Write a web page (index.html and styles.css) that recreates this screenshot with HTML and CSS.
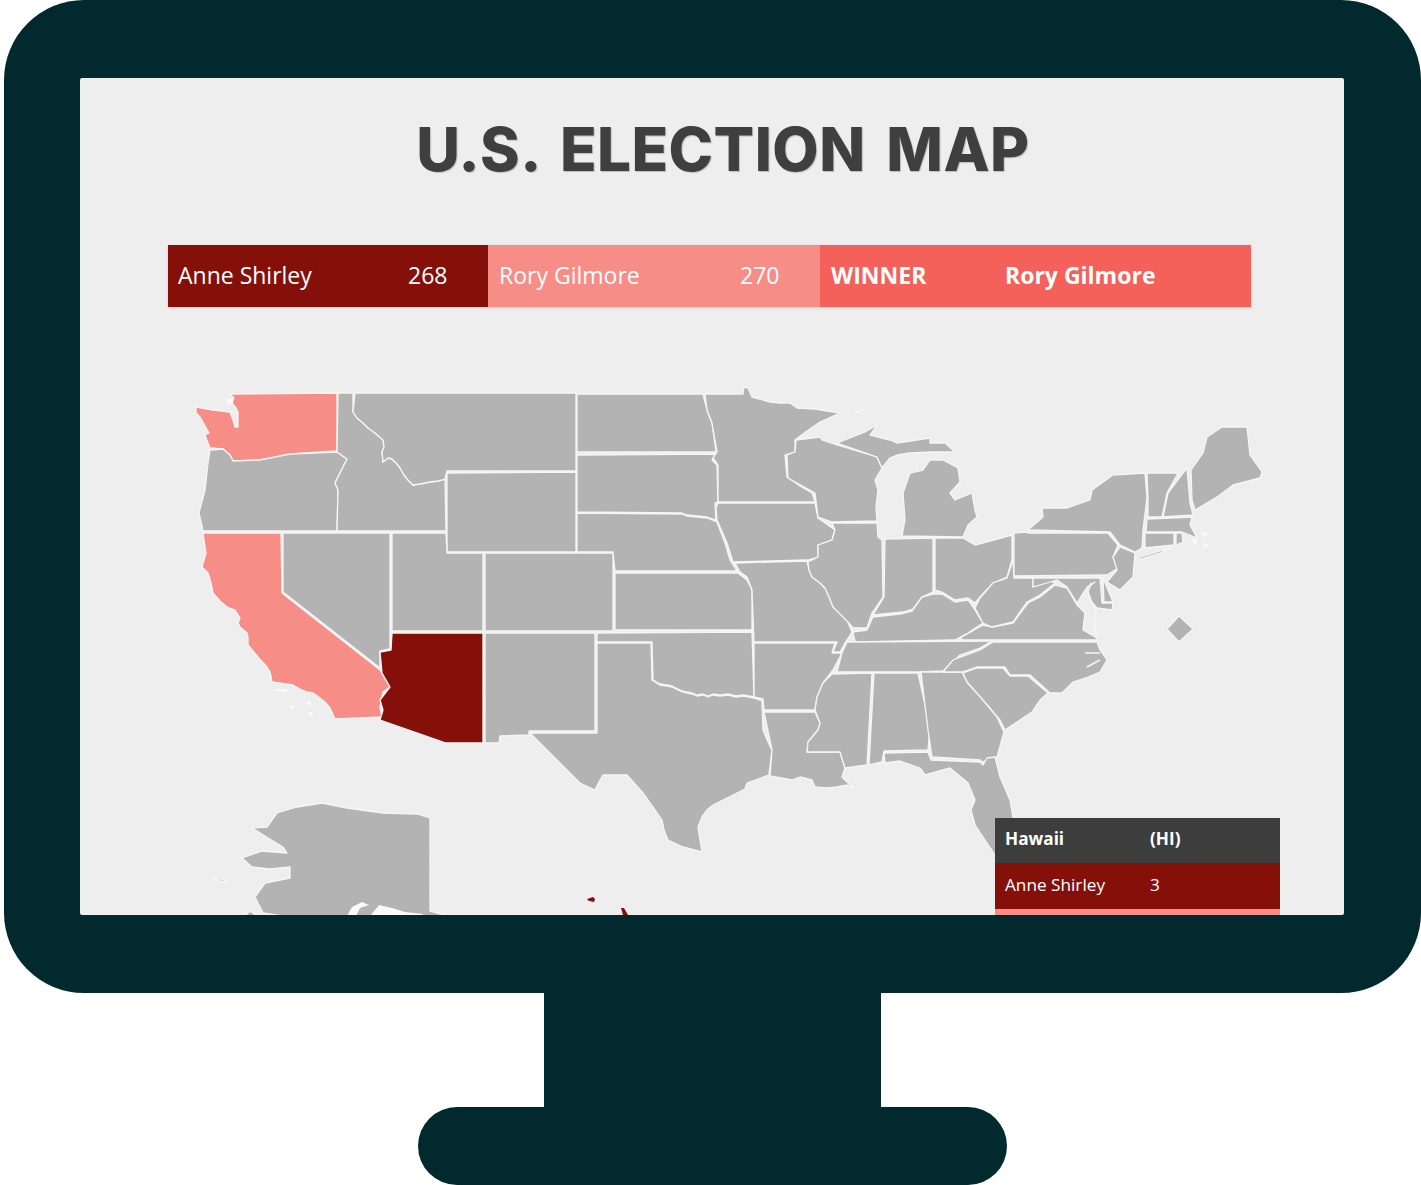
FILE: index.html
```html
<!DOCTYPE html>
<html lang="en">
<head>
<meta charset="utf-8">
<title>U.S. Election Map</title>
<link rel="stylesheet" href="styles.css">
</head>
<body>
<div class="monitor">
  <main class="screen">
    <h1 class="title">U.S. ELECTION MAP</h1>
    <section class="tally">
      <div class="seg seg-anne"><span class="seg-label">Anne Shirley</span><span>268</span></div>
      <div class="seg seg-rory"><span class="seg-label">Rory Gilmore</span><span>270</span></div>
      <div class="seg seg-winner"><span class="seg-label">WINNER</span><span>Rory Gilmore</span></div>
    </section>
    <svg class="map" viewBox="160 380 1140 535" aria-label="Map of U.S. states">
      <g class="land">
        <path class="pink" d="M230,394 L337,393 L337,451 L290,454 L277,457 L260,460 L233,461 L230,455 L223,449 L210,448 L208,443 L206,438 L205,435 L209,433 L200,417 L196,413 L196,407 L213,410 L230,412 L233,420 L235,427 L238,427 L238,412 L236,408 L232,403 L234,398 Z"/>
        <path d="M210,450 L223,449 L230,455 L233,461 L260,460 L290,454 L337,452 L347,459 L335,483 L338,490 L337,531 L203,531 L199,513 L205,490 L208,463 Z"/>
        <path d="M338,393 L353,393 L353,412 L357,418 L363,423 L368,428 L375,433 L383,440 L384,447 L382,452 L383,462 L388,458 L392,459 L397,464 L400,468 L404,475 L408,480 L413,485 L420,484 L430,482 L438,481 L445,479 L446,531 L337,531 L338,490 L335,483 L347,459 L337,452 Z"/>
        <path d="M355,393 L576,393 L576,471 L447,471 L445,479 L438,481 L430,482 L420,484 L413,485 L408,480 L404,475 L400,468 L397,464 L392,459 L388,458 L383,462 L382,452 L384,447 L383,440 L375,433 L368,428 L363,423 L357,418 L353,412 Z"/>
        <path d="M447,473 L576,472 L576,552 L447,552 Z"/>
        <path class="pink" d="M203,533 L281,533 L282,593 L380,670 L390,687 L383,692 L380,707 L382,717 L335,719 L330,708 L325,702 L320,698 L313,693 L307,692 L300,689 L293,685 L272,682 L270,672 L267,667 L258,657 L248,645 L248,638 L247,633 L240,627 L238,623 L240,618 L235,610 L227,607 L220,601 L213,593 L211,583 L208,573 L202,567 L204,560 L206,553 L205,547 Z"/>
        <path d="M283,533 L390,533 L390,649 L380,651 L380,668 L283,592 Z"/>
        <path d="M392,533 L446,533 L447,553 L483,553 L483,631 L392,631 Z"/>
        <path class="red" d="M392,633 L483,633 L483,743 L446,743 L380,720 L383,710 L380,700 L390,687 L382,673 L380,652 L391,650 Z"/>
        <path d="M485,553 L613,553 L613,631 L485,631 Z"/>
        <path d="M485,633 L595,633 L595,731 L529,731 L529,735 L500,736 L499,743 L485,743 Z"/>
        <path d="M597,633 L752,632 L754,697 L743,695 L736,696 L728,694 L720,695 L713,694 L708,696 L703,694 L697,695 L692,693 L687,692 L680,690 L672,686 L667,685 L660,684 L653,680 L652,642 L597,642 Z"/>
        <path d="M597,643 L651,643 L652,680 L660,685 L667,686 L672,687 L680,691 L687,693 L692,694 L697,696 L703,695 L708,697 L713,695 L720,696 L728,695 L736,697 L743,696 L754,698 L762,701 L763,730 L768,742 L772,750 L769,775 L758,779 L747,783 L745,789 L737,793 L725,799 L713,805 L707,810 L702,817 L698,827 L700,840 L702,852 L683,847 L668,840 L664,830 L662,820 L653,807 L643,793 L635,784 L627,775 L603,775 L599,782 L595,790 L580,783 L570,773 L560,763 L530,733 L597,733 Z"/>
        <path d="M577,394 L703,394 L707,410 L712,423 L716,452 L577,452 Z"/>
        <path d="M577,455 L715,454 L712,460 L717,465 L718,502 L715,503 L716,520 L707,517 L687,515 L682,513 L577,512 Z"/>
        <path d="M577,513 L682,514 L687,516 L707,518 L717,522 L725,543 L730,560 L737,571 L615,571 L613,552 L577,552 Z"/>
        <path d="M615,573 L738,573 L747,580 L752,590 L752,630 L615,630 Z"/>
        <path d="M705,394 L743,394 L744,387 L748,388 L752,397 L770,402 L780,403 L790,403 L797,408 L815,409 L840,413 L820,422 L807,431 L795,440 L795,452 L785,455 L787,477 L800,486 L812,493 L815,502 L718,502 L718,465 L713,458 L717,452 L712,423 L707,410 Z"/>
        <path d="M718,503 L815,503 L818,518 L835,530 L832,540 L818,545 L818,557 L808,560 L733,562 L727,543 L717,520 L716,508 Z"/>
        <path d="M735,563 L807,561 L809,570 L812,577 L820,583 L825,588 L829,597 L833,607 L840,613 L847,620 L852,632 L845,643 L840,652 L833,652 L837,642 L754,642 L752,590 L747,577 L740,572 Z"/>
        <path d="M754,643 L835,643 L832,653 L842,653 L833,670 L823,683 L817,697 L815,710 L764,710 L763,699 L754,697 Z"/>
        <path d="M764,712 L815,712 L820,723 L818,730 L808,742 L807,752 L840,752 L845,768 L842,777 L853,788 L847,785 L837,787 L827,788 L815,787 L812,780 L800,777 L792,780 L770,776 L772,750 Z"/>
        <path d="M796,440 L820,437 L822,440 L837,445 L877,457 L882,468 L875,480 L878,490 L876,507 L877,521 L832,522 L818,517 L815,493 L788,478 L787,455 L795,452 Z"/>
        <path d="M837,443 L865,432 L877,425 L870,435 L890,440 L897,443 L917,440 L930,438 L930,443 L945,443 L955,452 L933,452 L910,453 L897,455 L890,458 L882,468 L877,457 Z"/>
        <path d="M903,493 L910,473 L923,470 L930,460 L943,460 L958,468 L960,482 L950,493 L955,500 L972,493 L975,510 L977,517 L968,525 L963,537 L902,536 L905,520 Z"/>
        <path d="M832,523 L877,523 L878,537 L882,540 L883,597 L872,613 L867,628 L853,628 L848,622 L840,614 L833,607 L829,597 L825,588 L820,583 L812,577 L809,570 L808,562 L818,557 L818,545 L832,540 L835,530 Z"/>
        <path d="M885,539 L933,538 L933,592 L922,597 L913,609 L903,612 L873,615 L884,597 Z"/>
        <path d="M935,538 L963,538 L975,545 L1012,535 L1012,560 L1007,577 L993,583 L980,597 L975,603 L968,598 L955,600 L942,592 L935,590 Z"/>
        <path d="M873,617 L900,614 L912,611 L922,597 L933,594 L942,594 L955,602 L968,600 L975,610 L983,623 L968,633 L955,640 L855,642 L853,632 L867,630 Z"/>
        <path d="M847,642 L992,641 L980,648 L960,655 L943,671 L918,672 L837,672 L842,653 Z"/>
        <path d="M832,674 L872,673 L867,765 L845,768 L840,752 L807,752 L808,742 L818,730 L820,723 L815,710 L817,697 L823,683 Z"/>
        <path d="M874,673 L918,673 L930,727 L928,750 L884,751 L882,762 L869,765 Z"/>
        <path d="M921,672 L962,672 L967,682 L983,700 L997,717 L1004,732 L997,757 L982,762 L980,760 L932,757 L928,730 Z"/>
        <path d="M884,753 L928,752 L931,760 L980,762 L983,765 L987,758 L995,757 L1000,777 L1010,800 L1013,817 L1020,860 L995,855 L975,825 L971,810 L975,800 L968,783 L950,768 L925,775 L920,768 L900,761 L885,763 Z"/>
        <path d="M963,673 L977,668 L1003,668 L1010,676 L1028,676 L1048,693 L1040,700 L1032,712 L1017,722 L1005,730 L1000,720 L983,700 L967,682 Z"/>
        <path d="M993,642 L1097,642 L1100,650 L1107,660 L1100,672 L1088,677 L1073,682 L1062,693 L1050,693 L1030,675 L1010,675 L1005,667 L977,667 L962,672 L943,672 L953,660 L980,650 Z"/>
        <path d="M960,638 L983,625 L992,627 L1013,623 L1028,603 L1040,597 L1055,585 L1067,588 L1077,605 L1085,613 L1083,630 L1097,638 L1097,640 L963,640 Z"/>
        <path d="M975,608 L980,598 L993,583 L1007,578 L1013,560 L1014,578 L1033,578 L1033,587 L1050,581 L1055,583 L1040,595 L1027,602 L1013,622 L992,627 L983,623 Z"/>
        <path d="M1014,533 L1027,532 L1028,533 L1108,533 L1118,545 L1113,557 L1120,567 L1107,575 L1014,576 Z"/>
        <path d="M1033,578 L1100,578 L1102,603 L1113,603 L1112,610 L1097,608 L1090,600 L1087,587 L1095,582 L1085,590 L1077,603 L1067,587 L1057,580 L1033,587 Z"/>
        <path d="M1103,578 L1108,590 L1113,602 L1104,602 Z"/>
        <path d="M1120,547 L1135,553 L1133,577 L1120,590 L1107,582 L1117,570 L1113,557 Z"/>
        <path d="M1028,530 L1043,517 L1042,508 L1067,508 L1090,500 L1092,490 L1113,475 L1145,473 L1147,498 L1143,530 L1142,548 L1135,552 L1120,545 L1110,532 Z"/>
        <path d="M1137,558 L1170,548 L1160,553 L1140,559 Z"/>
        <path d="M1147,473 L1178,473 L1167,493 L1162,517 L1148,517 L1148,498 Z"/>
        <path d="M1187,468 L1190,503 L1193,515 L1163,517 L1168,493 L1180,477 Z"/>
        <path d="M1191,470 L1203,453 L1207,437 L1222,427 L1247,427 L1250,455 L1262,472 L1260,478 L1233,485 L1217,497 L1195,510 L1192,500 Z"/>
        <path d="M1147,519 L1192,517 L1190,525 L1197,538 L1182,532 L1146,532 Z"/>
        <path d="M1145,533 L1174,533 L1174,545 L1145,548 Z"/>
        <path d="M1176,533 L1182,533 L1183,542 L1176,545 Z"/>
        <path d="M1179,616 L1193,629 L1179,642 L1167,629 Z"/>
        <path d="M430,818 L430,911 L445,915 L430,916 L283,916 L263,913 L255,897 L265,883 L290,878 L290,867 L270,869 L252,867 L242,858 L262,851 L287,853 L283,847 L268,838 L252,828 L267,827 L277,813 L297,807 L322,803 L347,808 L383,813 L417,814 Z"/>
        <path d="M245,916 L250,911 L257,916 Z"/>
        <path d="M213,879 L222,879 L228,882 L220,881 Z"/>
        <path class="bay" d="M347,916 L352,907 L362,902 L369,905 L360,908 L356,916 Z"/>
        <path class="bay" d="M370,916 L379,905 L392,908 L405,912 L423,914 L423,916 Z"/>
        <path class="bay" d="M226,399 L232,399 L233,404 L227,403 Z"/>
        <path class="bay" d="M853,413 L866,408 L858,413 Z"/>
        <path class="bay" d="M273,690 L284,689 L292,691 L282,692 Z"/>
        <path class="bay" d="M290,706 L293,705 L294,709 L291,709 Z"/>
        <path class="bay" d="M306,702 L311,702 L310,707 Z"/>
        <path class="bay" d="M308,712 L313,712 L312,716 Z"/>
        <path class="bay" d="M1200,532 L1208,533 L1205,538 Z"/>
        <path class="bay" d="M1191,540 L1197,539 L1196,545 Z"/>
        <path class="bay" d="M1203,543 L1209,545 L1205,548 Z"/>
        <path class="cut" d="M1091,583 L1088,592 L1092,603 L1096,612 L1094,625 L1097,636"/>
        <path class="cut" d="M1085,653 L1100,653"/>
        <path class="cut" d="M1087,667 L1100,660"/>
        <path class="hi" d="M587,899 L593,897 L595,899 L594,902 L589,901 Z"/>
        <path class="hi" d="M621,908 L624,908 L628,915 L623,915 Z"/>
      </g>
    </svg>
    <aside class="tip">
      <div class="tip-row tip-head"><span class="tip-label">Hawaii</span><span>(HI)</span></div>
      <div class="tip-row tip-anne"><span class="tip-label">Anne Shirley</span><span>3</span></div>
      <div class="tip-rory"></div>
    </aside>
  </main>
</div>
<div class="stand"></div>
<div class="base"></div>
</body>
</html>
```
FILE: styles.css
```css
html, body { margin: 0; padding: 0; background: #fff; }
body { width: 1421px; height: 1185px; overflow: hidden; font-family: "Open Sans", "Liberation Sans", sans-serif; color: #fff; }
.monitor { margin-left: 4px; width: 1417px; height: 993px; box-sizing: border-box; padding: 78px 77px 78px 76px; background: #022a2e; border-radius: 80px; }
.screen { position: relative; width: 1264px; height: 837px; background: #eee; border-radius: 2px; overflow: hidden; display: flex; flex-direction: column; }
.title { margin: 40px 0 0 22px; text-align: center; font-family: Inter, "Liberation Sans", sans-serif; font-size: 60px; line-height: 62px; font-weight: 800; letter-spacing: 0.5px; word-spacing: 7px; color: #3f3f3f; text-shadow: 1px 1px 1px rgba(0,0,0,.2); }
.tally { display: flex; margin: 65px 0 0 88px; width: 1083px; height: 62px; box-shadow: 0 1px 3px rgba(0,0,0,.12); }
.seg { display: flex; align-items: center; box-sizing: border-box; padding-left: 10px; padding-bottom: 2px; font-size: 23px; }
.seg-anne { width: 320px; background: #85100a; }
.seg-anne .seg-label { width: 230px; }
.seg-rory { width: 332px; padding-left: 11px; background: #f78d87; }
.seg-rory .seg-label { width: 241px; }
.seg-winner { flex: 1; padding-left: 11px; background: #f4615a; font-weight: 700; }
.seg-winner .seg-label { width: 174px; }
.map { display: block; width: 1140px; height: 535px; margin: 73px 0 0 80px; flex: none; }
.land path { fill: #b3b3b3; stroke: #f6f6f6; stroke-width: 1.3; stroke-linejoin: round; }
.land .pink { fill: #f78d87; }
.land .red { fill: #85100a; }
.land .bay { fill: #fafafa; stroke: none; }
.land .cut { fill: none; stroke: #f6f6f6; stroke-width: 1.5; }
.land .hi { fill: #85100a; stroke: none; }
.tip { position: absolute; left: 915px; top: 740px; width: 285px; }
.tip-row { display: flex; align-items: center; box-sizing: border-box; height: 46px; padding: 0 0 4px 10px; font-size: 17.2px; }
.tip-label { width: 145px; }
.tip-head { height: 45px; background: #3d3d3d; font-weight: 700; }
.tip-anne { background: #85100a; }
.tip-rory { height: 6px; background: #f78d87; }
.stand { margin-left: 544px; width: 337px; height: 114px; background: #022a2e; }
.base { margin-left: 418px; width: 589px; height: 78px; background: #022a2e; border-radius: 39px; }
```
